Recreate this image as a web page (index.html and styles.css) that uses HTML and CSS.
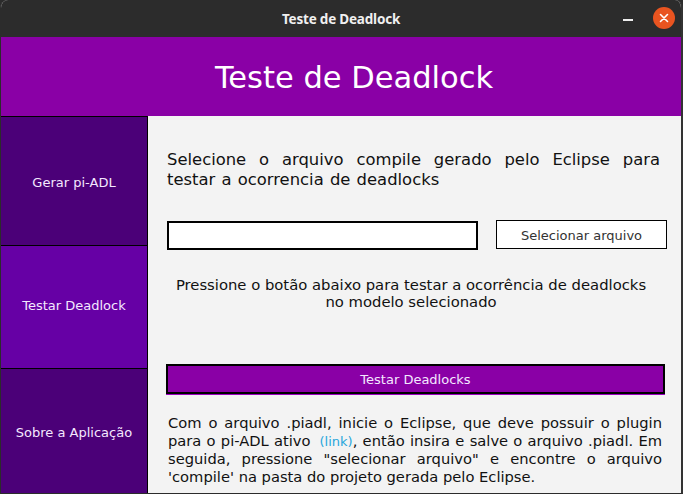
FILE: index.html
```html
<!DOCTYPE html>
<html lang="pt">
<head>
<meta charset="utf-8">
<title>Teste de Deadlock</title>
<link rel="stylesheet" href="styles.css">
</head>
<body>
<div class="window">
  <div class="titlebar">
    <span class="title">Teste de Deadlock</span>
    <div class="controls">
      <span class="min"></span>
      <span class="close">
        <svg width="22" height="22" viewBox="0 0 22 22"><circle cx="11" cy="11" r="11" fill="#e95420"/><path d="M7.5 7.5 L14.5 14.5 M14.5 7.5 L7.5 14.5" stroke="#fff" stroke-width="1.6" stroke-linecap="round"/></svg>
      </span>
    </div>
  </div>
  <div class="header">Teste de Deadlock</div>
  <div class="main">
    <nav class="sidebar">
      <div class="nav-item nav-dark">Gerar pi-ADL</div>
      <div class="nav-item nav-active">Testar Deadlock</div>
      <div class="nav-item nav-dark nav-last">Sobre a Aplicação</div>
    </nav>
    <section class="content">
      <p class="intro">Selecione o arquivo compile gerado pelo Eclipse para testar a ocorrencia de deadlocks</p>
      <div class="file-row">
        <div class="file-input"></div>
        <div class="file-btn">Selecionar arquivo</div>
      </div>
      <p class="hint">Pressione o botão abaixo para testar a ocorrência de deadlocks<br>no modelo selecionado</p>
      <div class="run-btn">Testar Deadlocks</div>
      <p class="info">Com o arquivo .piadl, inicie o Eclipse, que deve possuir o plugin para o pi-ADL ativo<span class="link">(link)</span>, então insira e salve o arquivo .piadl. Em seguida, pressione "selecionar arquivo" e encontre o arquivo 'compile' na pasta do projeto gerada pelo Eclipse.</p>
    </section>
  </div>
</div>
</body>
</html>
```

FILE: styles.css
```css
* { box-sizing: border-box; }
html, body { margin: 0; padding: 0; background: #2c2c2c; }
body { width: 683px; height: 494px; overflow: hidden; font-family: "DejaVu Sans", sans-serif; }

.window {
  width: 683px;
  height: 494px;
  display: flex;
  flex-direction: column;
  background: #f2f2f2;
  border-radius: 8px 8px 0 0;
  overflow: hidden;
  border-right: 2px solid #333;
  border-left: 1px solid #2c2c2c;
  border-bottom: 1px solid #2c2c2c;
}

.titlebar {
  height: 37px;
  flex: none;
  background: #2c2c2c;
  color: #f0f0f0;
  display: flex;
  align-items: center;
  justify-content: center;
  position: relative;
}
.title { font-family: "Noto Sans", sans-serif; font-weight: 700; font-size: 13.5px; letter-spacing: -0.2px; }
.controls {
  position: absolute;
  right: 6px;
  top: 7px;
  display: flex;
  align-items: center;
  gap: 20px;
}
.min { width: 10px; height: 2px; background: #eee; margin-top: 4px; }
.close { width: 22px; height: 22px; display: block; }
.close svg { display: block; }

.header {
  height: 79px;
  flex: none;
  background: #8a00a6;
  color: #fff;
  font-size: 30.5px;
  display: flex;
  align-items: center;
  justify-content: center;
  padding-left: 26px;
  padding-top: 1px;
}

.main { flex: 1; display: flex; min-height: 0; }

.sidebar { width: 147px; flex: none; display: flex; flex-direction: column; }
.nav-item {
  color: #f4e8ff;
  font-size: 13px;
  display: flex;
  align-items: center;
  justify-content: center;
  border: 1px solid #000;
  border-left: none;
  border-bottom: none;
  padding-top: 2px;
}
.nav-dark { background: #4b0078; }
.nav-active { background: #6600a5; padding-top: 0; padding-bottom: 3px; }
.sidebar .nav-item:nth-child(1) { height: 129px; }
.sidebar .nav-item:nth-child(2) { height: 123px; }
.nav-last { flex: 1; }

.content {
  flex: 1;
  background: #f3f3f3;
  padding: 0 16px 0 19px;
  color: #111;
  display: flex;
  flex-direction: column;
}
.intro {
  margin: 34px 0 0 0;
  font-size: 16.4px;
  line-height: 20px;
  text-align: justify;
  word-spacing: 1px;
  padding-right: 7px;
}
.file-row { display: flex; align-items: center; margin-top: 29px; }
.file-input {
  width: 311px;
  height: 29px;
  background: #fff;
  border: 2px solid #000;
  margin-top: 2px;
}
.file-btn {
  width: 171px;
  height: 29px;
  margin-left: 18px;
  background: #fff;
  border: 1px solid #000;
  font-size: 13px;
  color: #333;
  display: flex;
  align-items: center;
  justify-content: center;
  padding-top: 2px;
}
.hint {
  margin: 26px 0 0 0;
  font-size: 14.8px;
  line-height: 17px;
  text-align: center;
  padding-right: 12px;
}
.run-btn {
  margin-top: 54px;
  margin-left: -1px;
  width: 499px;
  height: 30px;
  background: #8a00a6;
  border: 2px solid #000;
  color: #f4e8ff;
  font-size: 13px;
  display: flex;
  align-items: center;
  justify-content: center;
  box-shadow: 0 1px 0 #9b00c0;
}
.info {
  margin: 20px 0 0 1px;
  font-size: 14.7px;
  line-height: 18px;
  text-align: justify;
  padding-right: 5px;
}
.link { color: #28a6dc; font-size: 13px; line-height: 14px; margin-left: 9px; }
```
